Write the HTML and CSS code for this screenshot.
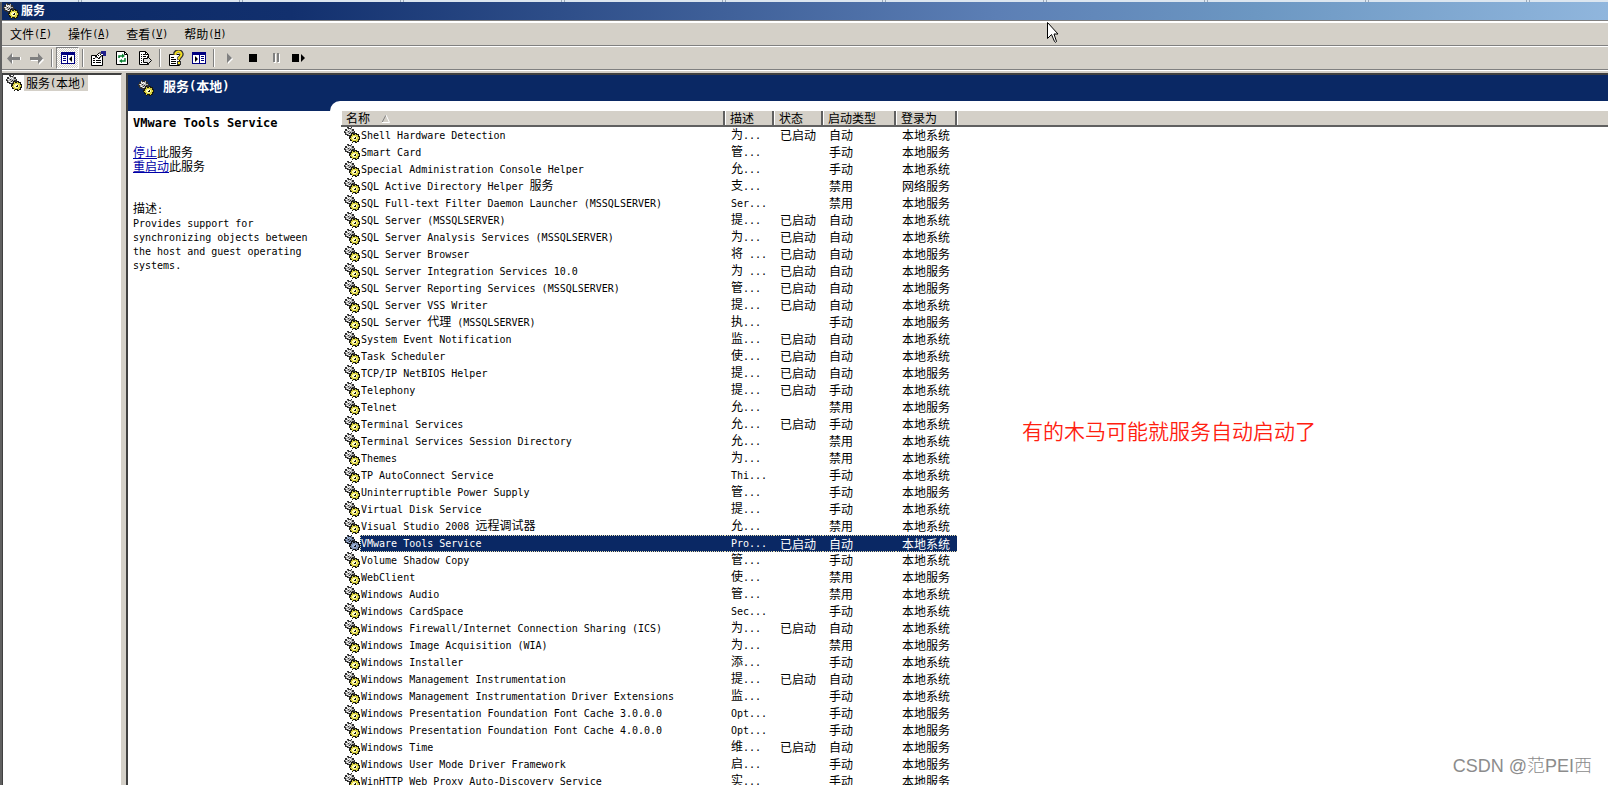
FILE: index.html
```
<!DOCTYPE html>
<html lang="zh-CN">
<head>
<meta charset="utf-8">
<title>服务</title>
<link rel="stylesheet" href="styles.css">
</head>
<body>
<svg class="defs" aria-hidden="true">
  <symbol id="gears" viewBox="0 0 16 16">
    <g shape-rendering="crispEdges">
      <path d="M3 0h2v1h2V0h1v2h2v2h1v3H9v2H7v1H5V9H3V8H1V6H0V4h1V2h2z" fill="#303030"/>
      <path d="M3 1h1v1h3V1h1v2h1v1h1v1H8v3H7v1H6V8H4V7H2V5H1V4h2z" fill="#b4b4b4"/>
      <path d="M3 2h1v1H3zM5 2h1v1H5zM2 4h1v1H2zM4 3h1v1H4zM6 3h1v1H6zM3 6h1v1H3zM5 7h1v1H5z" fill="#fff"/>
      <path d="M4 4h1v1H4zM6 5h1v1H6zM5 6h1v1H5zM2 3h1v1H2zM8 3h1v1H8z" fill="#303030"/>
      <path d="M7 6h2v1h2V6h2v1h2v2h1v4h-1v2h-2v1h-2v-1H9v1H8v-2H6v-2H5v-2h1V8h1z" fill="#181810"/>
      <path d="M8 7h1v1h2V7h1v1h2v2h1v2h-1v2h-1v1h-1v-1H9v1H8v-2H7v-1H6v-1h1V9h1z" fill="#d8d040"/>
      <path d="M9 9h3v1h1v2h-1v1H9v-1H8v-2h1z" fill="#fffcb0"/>
      <path d="M10 10h2v2h-2z" fill="#181810"/>
      <path d="M10 10h1v1h-1z" fill="#fff"/>
    </g>
  </symbol>
</svg>

<div class="backdrop"><i></i><i></i><i></i><i></i><i></i><i></i><i></i><i></i><i></i><i></i></div>
<div class="window">
  <header class="titlebar"><svg class="gear"><use href="#gears"/></svg><h1>服务</h1></header>

  <nav class="menubar">
    <button><span class="zh">文件</span>(<u>F</u>)</button>
    <button><span class="zh">操作</span>(<u>A</u>)</button>
    <button><span class="zh">查看</span>(<u>V</u>)</button>
    <button><span class="zh">帮助</span>(<u>H</u>)</button>
  </nav>

  <div class="toolbar" role="toolbar">
    <button aria-label="后退"><svg viewBox="0 0 16 16"><path d="M7 4v3h8v3H7v4L2 9z" fill="#fff"/><path d="M6 3v4h8v3H6v4L1 8.500z" fill="#808080"/></svg></button>
    <button aria-label="前进"><svg viewBox="0 0 16 16"><path d="M10 4v3H2v4h8v4l5-5z" fill="#fff"/><path d="M9 3v4H1v3h8v4l5-5.500z" fill="#808080"/></svg></button>
    <span class="sep"></span>
    <button class="pressed" aria-label="显示控制台树" aria-pressed="true"><svg viewBox="0 0 16 16"><path d="M1 2h14v12H1z" fill="#000080"/><path d="M2 5h5v8H2zM8 5h6v8H8z" fill="#fff"/><path d="M3 6h3v1H3zM3 8h3v1H3zM3 10h3v1H3z" fill="#000080"/><path d="M12 6v6L9 9z" fill="#000"/></svg></button>
    <span class="sep"></span>
    <button aria-label="属性"><svg viewBox="0 0 16 16"><path d="M.5 5.500h11v10H.5z" fill="#fff" stroke="#000"/><path d="M2 10h2v1H2zM5 10h5v1H5zM2 12h2v1H2zM5 12h5v1H5zM2 8h2v1H2z" fill="#000"/><path d="M4 7l4-4h4l1 2-3 1-2 3-2-2z" fill="#fff" stroke="#000"/><path d="M5 6h1v1H5zM7 5h1v1H7zM8 7h1v1H8zM9 4h1v1H9z"/><path d="M10 1h5v5h-3V4h-2z" fill="#20208a"/></svg></button>
    <button aria-label="刷新"><svg viewBox="0 0 16 16"><path d="M2.500 1.500h8l3 3v10h-11z" fill="#fff" stroke="#000"/><path d="M10.500 1.500v3h3" fill="none" stroke="#000"/><path d="M5 8V6h4M11 8v3H7" fill="none" stroke="#088030" stroke-width="1.500"/><path d="M8 3.500L11 6 8 8zM8 9l-3 2 3 2z" fill="#088030"/></svg></button>
    <button aria-label="导出列表"><svg viewBox="0 0 16 16"><path d="M2.500 1.500h6l3 3v10h-9z" fill="#fff" stroke="#000"/><path d="M8.500 1.500v3h3" fill="none" stroke="#000"/><path d="M4 4h1v1H4zM6 4h2v1H6zM4 6h1v1H4zM6 6h3v1H6zM4 8h1v1H4zM4 10h1v1H4zM4 12h1v1H4z"/><path d="M6.500 8.500h4v-2l4 4-4 4v-2h-4z" fill="#ddd" stroke="#000"/></svg></button>
    <span class="sep"></span>
    <button aria-label="帮助"><svg viewBox="0 0 16 16"><path d="M1.500 4.500h10v11h-10z" fill="#fff" stroke="#000"/><path d="M3 7h3v1H3zM3 9h5v1H3zM3 11h5v1H3zM3 13h5v1H3z"/><path d="M7 5V3q1-2 3.500-2T14 4q0 2-3 4v2" fill="none" stroke="#333" stroke-width="3.500"/><path d="M7.500 5V3.500Q8.500 1.500 10.500 1.500T13.500 4q0 2-2.500 4v1.500" fill="none" stroke="#f4e020" stroke-width="2"/><path d="M9 11h4v4H9z" fill="#333"/><path d="M10 12h2v2h-2z" fill="#f4e020"/></svg></button>
    <button aria-label="显示操作窗格"><svg viewBox="0 0 16 16"><path d="M1 2h14v12H1z" fill="#000080"/><path d="M2 5h6v8H2zM9 5h5v8H9z" fill="#fff"/><path d="M10 6h3v1h-3zM10 8h3v1h-3zM10 10h3v1h-3z" fill="#000080"/><path d="M4 6v6l3-3z" fill="#000"/></svg></button>
    <span class="sep"></span>
    <button aria-label="启动服务"><svg viewBox="0 0 16 16"><path d="M6 4v10l5-5z" fill="#fff"/><path d="M5 3v10l5-5z" fill="#808080"/></svg></button>
    <button aria-label="停止服务"><svg viewBox="0 0 16 16"><path d="M4 4h8v8H4z"/></svg></button>
    <button aria-label="暂停服务"><svg viewBox="0 0 16 16"><path d="M6 4h2v9H6zM10 4h2v9h-2z" fill="#fff"/><path d="M5 3h2v9H5zM9 3h2v9H9z" fill="#808080"/></svg></button>
    <button aria-label="重启动服务"><svg viewBox="0 0 16 16"><path d="M1 4h7v8H1zM10 4v8l4-4z"/></svg></button>
  </div>

  <main class="panes">
    <aside class="tree"><svg class="gear"><use href="#gears"/></svg><span class="node"><span class="zh">服务</span>(<span class="zh">本地</span>)</span></aside>

    <div class="content">
      <section class="detail">
        <div class="banner"><svg class="gear"><use href="#gears"/></svg><h2><span>服务</span>(<span>本地</span>)</h2></div>
        <div class="info">
          <h3>VMware Tools Service</h3>
          <p class="zh"><a href="#stop">停止</a>此服务<br><a href="#restart">重启动</a>此服务</p>
          <p class="about"><span class="zh">描述</span>:<br>Provides support for synchronizing objects between the host and guest operating systems.</p>
        </div>
      </section>

      <section class="list">
        <table>
          <colgroup><col class="c-name"><col class="c-desc"><col class="c-state"><col class="c-type"><col class="c-logon"><col></colgroup>
          <thead><tr><th>名称<svg class="sort" viewBox="0 0 8 8"><path d="M4 0L0 7.500" stroke="#808080"/><path d="M4 0l3.500 7.500H0" fill="none" stroke="#fff"/></svg></th><th>描述</th><th>状态</th><th>启动类型</th><th>登录为</th><th></th></tr></thead>
          <tbody>
<tr><td><svg class="gear"><use href="#gears"/></svg><span>Shell Hardware Detection</span></td><td><b>为</b>...</td><td>已启动</td><td>自动</td><td>本地系统</td></tr>
<tr><td><svg class="gear"><use href="#gears"/></svg><span>Smart Card</span></td><td><b>管</b>...</td><td></td><td>手动</td><td>本地服务</td></tr>
<tr><td><svg class="gear"><use href="#gears"/></svg><span>Special Administration Console Helper</span></td><td><b>允</b>...</td><td></td><td>手动</td><td>本地系统</td></tr>
<tr><td><svg class="gear"><use href="#gears"/></svg><span>SQL Active Directory Helper <b>服务</b></span></td><td><b>支</b>...</td><td></td><td>禁用</td><td>网络服务</td></tr>
<tr><td><svg class="gear"><use href="#gears"/></svg><span>SQL Full-text Filter Daemon Launcher (MSSQLSERVER)</span></td><td>Ser...</td><td></td><td>禁用</td><td>本地服务</td></tr>
<tr><td><svg class="gear"><use href="#gears"/></svg><span>SQL Server (MSSQLSERVER)</span></td><td><b>提</b>...</td><td>已启动</td><td>自动</td><td>本地系统</td></tr>
<tr><td><svg class="gear"><use href="#gears"/></svg><span>SQL Server Analysis Services (MSSQLSERVER)</span></td><td><b>为</b>...</td><td>已启动</td><td>自动</td><td>本地系统</td></tr>
<tr><td><svg class="gear"><use href="#gears"/></svg><span>SQL Server Browser</span></td><td><b>将</b> ...</td><td>已启动</td><td>自动</td><td>本地服务</td></tr>
<tr><td><svg class="gear"><use href="#gears"/></svg><span>SQL Server Integration Services 10.0</span></td><td><b>为</b> ...</td><td>已启动</td><td>自动</td><td>本地服务</td></tr>
<tr><td><svg class="gear"><use href="#gears"/></svg><span>SQL Server Reporting Services (MSSQLSERVER)</span></td><td><b>管</b>...</td><td>已启动</td><td>自动</td><td>本地服务</td></tr>
<tr><td><svg class="gear"><use href="#gears"/></svg><span>SQL Server VSS Writer</span></td><td><b>提</b>...</td><td>已启动</td><td>自动</td><td>本地系统</td></tr>
<tr><td><svg class="gear"><use href="#gears"/></svg><span>SQL Server <b>代理</b> (MSSQLSERVER)</span></td><td><b>执</b>...</td><td></td><td>手动</td><td>本地服务</td></tr>
<tr><td><svg class="gear"><use href="#gears"/></svg><span>System Event Notification</span></td><td><b>监</b>...</td><td>已启动</td><td>自动</td><td>本地系统</td></tr>
<tr><td><svg class="gear"><use href="#gears"/></svg><span>Task Scheduler</span></td><td><b>使</b>...</td><td>已启动</td><td>自动</td><td>本地系统</td></tr>
<tr><td><svg class="gear"><use href="#gears"/></svg><span>TCP/IP NetBIOS Helper</span></td><td><b>提</b>...</td><td>已启动</td><td>自动</td><td>本地服务</td></tr>
<tr><td><svg class="gear"><use href="#gears"/></svg><span>Telephony</span></td><td><b>提</b>...</td><td>已启动</td><td>手动</td><td>本地系统</td></tr>
<tr><td><svg class="gear"><use href="#gears"/></svg><span>Telnet</span></td><td><b>允</b>...</td><td></td><td>禁用</td><td>本地服务</td></tr>
<tr><td><svg class="gear"><use href="#gears"/></svg><span>Terminal Services</span></td><td><b>允</b>...</td><td>已启动</td><td>手动</td><td>本地系统</td></tr>
<tr><td><svg class="gear"><use href="#gears"/></svg><span>Terminal Services Session Directory</span></td><td><b>允</b>...</td><td></td><td>禁用</td><td>本地系统</td></tr>
<tr><td><svg class="gear"><use href="#gears"/></svg><span>Themes</span></td><td><b>为</b>...</td><td></td><td>禁用</td><td>本地系统</td></tr>
<tr><td><svg class="gear"><use href="#gears"/></svg><span>TP AutoConnect Service</span></td><td>Thi...</td><td></td><td>手动</td><td>本地系统</td></tr>
<tr><td><svg class="gear"><use href="#gears"/></svg><span>Uninterruptible Power Supply</span></td><td><b>管</b>...</td><td></td><td>手动</td><td>本地服务</td></tr>
<tr><td><svg class="gear"><use href="#gears"/></svg><span>Virtual Disk Service</span></td><td><b>提</b>...</td><td></td><td>手动</td><td>本地系统</td></tr>
<tr><td><svg class="gear"><use href="#gears"/></svg><span>Visual Studio 2008 <b>远程调试器</b></span></td><td><b>允</b>...</td><td></td><td>禁用</td><td>本地系统</td></tr>
<tr class="selected"><td><svg class="gear"><use href="#gears"/></svg><span>VMware Tools Service</span></td><td>Pro...</td><td>已启动</td><td>自动</td><td>本地系统</td></tr>
<tr><td><svg class="gear"><use href="#gears"/></svg><span>Volume Shadow Copy</span></td><td><b>管</b>...</td><td></td><td>手动</td><td>本地系统</td></tr>
<tr><td><svg class="gear"><use href="#gears"/></svg><span>WebClient</span></td><td><b>使</b>...</td><td></td><td>禁用</td><td>本地服务</td></tr>
<tr><td><svg class="gear"><use href="#gears"/></svg><span>Windows Audio</span></td><td><b>管</b>...</td><td></td><td>禁用</td><td>本地系统</td></tr>
<tr><td><svg class="gear"><use href="#gears"/></svg><span>Windows CardSpace</span></td><td>Sec...</td><td></td><td>手动</td><td>本地系统</td></tr>
<tr><td><svg class="gear"><use href="#gears"/></svg><span>Windows Firewall/Internet Connection Sharing (ICS)</span></td><td><b>为</b>...</td><td>已启动</td><td>自动</td><td>本地系统</td></tr>
<tr><td><svg class="gear"><use href="#gears"/></svg><span>Windows Image Acquisition (WIA)</span></td><td><b>为</b>...</td><td></td><td>禁用</td><td>本地服务</td></tr>
<tr><td><svg class="gear"><use href="#gears"/></svg><span>Windows Installer</span></td><td><b>添</b>...</td><td></td><td>手动</td><td>本地系统</td></tr>
<tr><td><svg class="gear"><use href="#gears"/></svg><span>Windows Management Instrumentation</span></td><td><b>提</b>...</td><td>已启动</td><td>自动</td><td>本地系统</td></tr>
<tr><td><svg class="gear"><use href="#gears"/></svg><span>Windows Management Instrumentation Driver Extensions</span></td><td><b>监</b>...</td><td></td><td>手动</td><td>本地系统</td></tr>
<tr><td><svg class="gear"><use href="#gears"/></svg><span>Windows Presentation Foundation Font Cache 3.0.0.0</span></td><td>Opt...</td><td></td><td>手动</td><td>本地服务</td></tr>
<tr><td><svg class="gear"><use href="#gears"/></svg><span>Windows Presentation Foundation Font Cache 4.0.0.0</span></td><td>Opt...</td><td></td><td>手动</td><td>本地服务</td></tr>
<tr><td><svg class="gear"><use href="#gears"/></svg><span>Windows Time</span></td><td><b>维</b>...</td><td>已启动</td><td>自动</td><td>本地服务</td></tr>
<tr><td><svg class="gear"><use href="#gears"/></svg><span>Windows User Mode Driver Framework</span></td><td><b>启</b>...</td><td></td><td>手动</td><td>本地服务</td></tr>
<tr><td><svg class="gear"><use href="#gears"/></svg><span>WinHTTP Web Proxy Auto-Discovery Service</span></td><td><b>实</b>...</td><td></td><td>手动</td><td>本地服务</td></tr>
          </tbody>
        </table>
      </section>
    </div>
  </main>
</div>

<p class="note">有的木马可能就服务自动启动了</p>
<p class="watermark">CSDN @范PEI西</p>
<svg class="cursor" viewBox="0 0 12 22"><path d="M.5.500v16l4-4 3 7q1 1.500 2 0l-2.500-7.500h4z" fill="#fff" stroke="#000"/></svg>
</body>
</html>
```
FILE: styles.css
```
* { box-sizing: border-box; }

:root {
  --face: #d4d0c8;
  --navy: #0a2864;
  --mono: "DejaVu Sans Mono", "Liberation Mono", "Noto Sans CJK SC", monospace;
  --cjk: "Noto Sans CJK SC", sans-serif;
}

body {
  position: relative;
  display: flex;
  flex-direction: column;
  height: 100vh;
  margin: 0;
  overflow: hidden;
  background: #fff;
  color: #000;
  font: 10px/14px var(--mono);
}

h1, h2, h3, p { margin: 0; }
svg { flex: none; }
.defs { position: absolute; width: 0; height: 0; }
.gear { width: 16px; height: 16px; }
.zh { font-family: var(--cjk); font-size: 12px; }

button {
  padding: 0;
  border: 0;
  background: none;
  color: inherit;
  font: inherit;
}

.backdrop {
  display: flex;
  justify-content: space-around;
  height: 2px;
  background: #dce6f0;
}
.backdrop i { width: 4px; border: solid #9aa8b8; border-width: 0 1px; }

.window {
  display: flex;
  flex: 1;
  flex-direction: column;
  min-height: 0;
  border-left: 2px solid #606060;
  background: var(--face);
}

.titlebar {
  display: flex;
  align-items: center;
  height: 18px;
  padding-left: 1px;
  gap: 2px;
  background: linear-gradient(90deg, #0a2864, #12306e 18%, #5c7fb5 62%, #6c97c2 78%, #90b6dd);
  color: #fff;
}
.titlebar h1 { font: bold 12px/16px var(--cjk); padding-bottom: 2px; }

.menubar {
  display: flex;
  align-items: center;
  gap: 16px;
  height: 26px;
  padding: 2px 8px 0;
  border-top: 1px solid #808080;
  border-bottom: 1px solid #808080;
  box-shadow: inset 0 2px #fff;
}
.menubar button { display: flex; align-items: center; line-height: 20px; }

.toolbar {
  display: flex;
  align-items: center;
  height: 24px;
  border-top: 1px solid #fff;
  border-bottom: 1px solid #808080;
}
.toolbar button {
  display: flex;
  align-items: center;
  justify-content: center;
  width: 23px;
  height: 22px;
}
.toolbar svg { width: 16px; height: 16px; }
.toolbar .pressed {
  border: 1px solid;
  border-color: #808080 #fff #fff #808080;
  background: repeating-conic-gradient(#fff 0 25%, #d4d0c8 0 50%) 0 0 / 2px 2px;
}
.sep {
  width: 2px;
  height: 18px;
  margin: 0 3px;
  border-left: 1px solid #808080;
  border-right: 1px solid #fff;
}

.panes {
  display: flex;
  flex: 1;
  gap: 4px;
  min-height: 0;
  padding-top: 2px;
  border-top: 1px solid #fff;
}

.tree {
  display: flex;
  flex: none;
  align-items: flex-start;
  gap: 2px;
  width: 120px;
  padding-left: 3px;
  border: 1px solid #404040;
  border-right-color: #d4d0c8;
  border-width: 2px 1px 0;
  background: #fff;
}
.node { display: flex; align-items: center; height: 16px; padding: 0 2px; background: var(--face); }

.content {
  display: flex;
  flex: 1;
  min-width: 0;
  border: 2px solid #404040;
  border-width: 2px 0 0 2px;
  background: var(--navy);
}

.detail {
  display: flex;
  flex: none;
  flex-direction: column;
  width: 202px;
}
.banner {
  display: flex;
  align-items: flex-start;
  gap: 9px;
  height: 36px;
  padding: 3px 10px;
  color: #fff;
}
.banner .gear { margin-top: 2px; }
.banner h2 { display: flex; font: bold 12px/16px var(--mono); }
.banner span { font-family: var(--cjk); font-size: 13px; }
.info { flex: 1; padding: 4px 5px; background: #fff; }
.info h3 { margin-bottom: 16px; font: bold 12px/16px var(--mono); margin-bottom: 14px; }
.info a { color: #0000a8; }
.about { width: 184px; margin-top: 29px; }
.about .zh { line-height: 12px; }
.detail { background: linear-gradient(var(--navy) 36px, #fff 0); }

.list {
  flex: 1;
  min-width: 0;
  margin-top: 26px;
  padding: 10px 0 0 11px;
  overflow: hidden;
  border-top-left-radius: 10px;
  background: #fff;
}

table { width: 100%; border-collapse: separate; border-spacing: 0; table-layout: fixed; }
.c-name { width: 384px; }
.c-desc, .c-state { width: 49px; }
.c-type { width: 73px; }
.c-logon { width: 61px; }

th {
  height: 16px;
  padding: 0 5px 1px;
  border: solid #606060;
  border-width: 0 2px 2px 0;
  background: var(--face);
  box-shadow: inset 1px 0 #fff;
  font: 12px/13px var(--cjk);
  text-align: left;
  white-space: nowrap;
}
th:last-child { border-right: 0; }
.sort { width: 8px; height: 8px; margin-left: 12px; }

td {
  height: 17px;
  padding: 0 0 2px 6px;
  font: 12px/15px var(--cjk);
  white-space: nowrap;
}
td:first-child { display: flex; padding: 0 0 0 3px; font: 10px/17px var(--mono); }
td:first-child > span { flex: 1; padding-left: 1px; }
td:nth-child(2) { padding: 0 0 0 6px; font: 10px/17px var(--mono); }
td b { font: 12px/12px var(--cjk); }

.selected td { padding-bottom: 0; border: 1px dotted #e8e0b0; border-width: 1px 0; background: var(--navy); color: #fff; line-height: 13px; }
.selected td:nth-child(2) { line-height: 15px; }
.selected td:first-child { border: 0; background: none; line-height: 15px; }
.selected td:first-child > span { padding-left: 0; border: 1px dotted #e8e0b0; border-right: 0; background: var(--navy); }
.selected .gear { filter: brightness(.6) sepia(1) hue-rotate(180deg); }

.note {
  position: absolute;
  top: 415px;
  left: 1022px;
  color: #ff2010;
  font: 350 21px/30px var(--cjk);
}
.watermark {
  position: absolute;
  right: 16px;
  bottom: 5px;
  color: #8c8c8c;
  font: 300 18px/28px "Liberation Sans", "Noto Sans CJK SC", sans-serif;
}
.cursor { position: absolute; top: 22px; left: 1047px; width: 12px; height: 22px; }
```
